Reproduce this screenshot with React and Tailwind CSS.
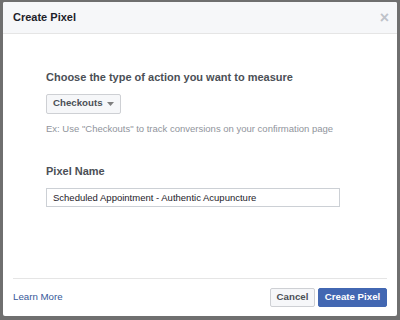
export default function App() {
  return (
    <div className="w-[400px] h-[320px] bg-[#6f6f6f] pt-[2px] pl-[3px] overflow-hidden" style={{ fontFamily: '"Liberation Sans", Arial, sans-serif' }}>
      <div className="w-[394px] h-[314px] bg-white flex flex-col rounded-[2px]">
        <div className="h-[32px] bg-[#f6f7f9] border-b border-[#e5e5e5] flex items-center justify-between pl-[10px] pr-[8px] rounded-t-[2px]">
          <span className="text-[11px] font-bold text-[#1d2129]">Create Pixel</span>
          <span className="text-[#bec2c9] text-[16px] leading-none font-bold">×</span>
        </div>
        <div className="flex-1 pl-[43px] pt-[35px]">
          <div className="text-[11px] font-bold text-[#4b4f56]">Choose the type of action you want to measure</div>
          <div className="mt-[8px] inline-flex items-center h-[20px] px-[6px] border border-[#ced0d4] bg-[#f6f7f9] rounded-[2px] text-[9.7px] font-bold text-[#4b4f56]">
            Checkouts
            <svg width="7" height="4" viewBox="0 0 7 4" className="ml-[4px]"><path d="M0 0h7L3.5 4z" fill="#7f7f7f" /></svg>
          </div>
          <div className="mt-[8px] text-[9.5px] text-[#90949c]">Ex: Use "Checkouts" to track conversions on your confirmation page</div>
          <div className="mt-[27px] text-[11px] font-bold text-[#4b4f56]">Pixel Name</div>
          <div className="mt-[9px] w-[294px] h-[19px] border border-[#ccd0d5] flex items-center px-[6px] text-[9.5px] text-[#1d2129]">Scheduled Appointment - Authentic Acupuncture</div>
        </div>
        <div className="mx-[10px] border-t border-[#e5e5e5] h-[38px] flex items-center justify-between">
          <span className="text-[9.7px] text-[#365899]">Learn More</span>
          <div className="flex gap-[3px]">
            <div className="h-[19px] w-[45px] justify-center border border-[#ced0d4] bg-[#f6f7f9] rounded-[2px] text-[9.7px] font-bold text-[#4b4f56] flex items-center">Cancel</div>
            <div className="h-[19px] w-[69px] justify-center border border-[#4267b2] bg-[#4267b2] rounded-[2px] text-[9.7px] font-bold text-white flex items-center">Create Pixel</div>
          </div>
        </div>
      </div>
    </div>
  );
}
